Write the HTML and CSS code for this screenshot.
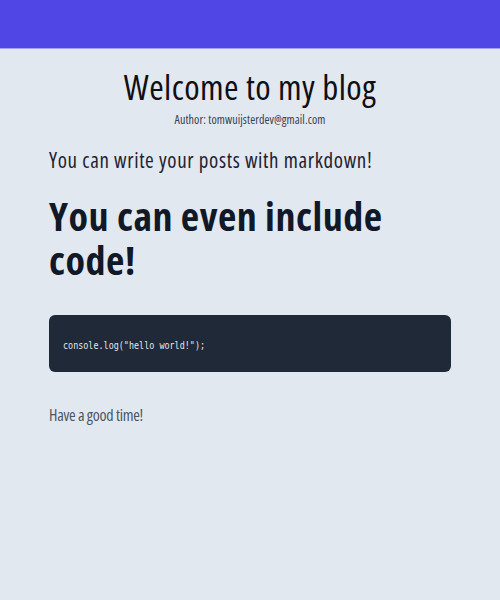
FILE: index.html
```html
<!DOCTYPE html>
<html lang="en">
<head>
<meta charset="utf-8">
<title>Welcome to my blog</title>
<link rel="stylesheet" href="styles.css">
</head>
<body>
<header class="topbar"></header>
<main class="page">
  <div class="intro">
    <h1 class="title">Welcome to my blog</h1>
    <p class="author">Author: tomwuijsterdev@gmail.com</p>
  </div>
  <article class="post">
    <p class="lead">You can write your posts with markdown!</p>
    <h2 class="big">You can even include code!</h2>
    <pre class="codeblock"><code class="code">console.log("hello world!");</code></pre>
    <p class="outro">Have a good time!</p>
  </article>
</main>
</body>
</html>
```
FILE: styles.css
```css
html, body {
  margin: 0;
  padding: 0;
}
body {
  background: #e2e8f0;
  font-family: "Open Sans", "Noto Sans", sans-serif;
  font-stretch: condensed;
  color: #111827;
  min-height: 600px;
}
.topbar {
  height: 48px;
  background: #4f46e5;
  border-bottom: 1px solid #a5a0f0;
}
.page {
  padding: 0 49px;
}
.intro {
  text-align: center;
  padding-top: 15px;
}
.title {
  margin: 0;
  font-size: 35px;
  font-weight: 400;
  line-height: 46px;
  letter-spacing: 0.45px;
  color: #0f0f14;
}
.author {
  margin: 2px 0 0;
  font-size: 12px;
  line-height: 16px;
  letter-spacing: 0.1px;
  color: #374151;
}
.post {
  padding-top: 18px;
}
.lead {
  margin: 0;
  font-size: 21px;
  line-height: 28px;
  letter-spacing: 0.65px;
  color: #1f2330;
}
.big {
  margin: 20px 0 0;
  font-size: 40px;
  font-weight: 700;
  line-height: 44px;
  letter-spacing: 0.55px;
  color: #111827;
}
.codeblock {
  margin: 33px 0 0;
  height: 57px;
  box-sizing: border-box;
  padding: 22px 14px 0;
  background: #1f2937;
  border-radius: 6px;
  overflow: hidden;
}
.code {
  display: inline-block;
  font-family: "DejaVu Sans Mono", monospace;
  font-size: 11px;
  line-height: 14px;
  color: #e5e7eb;
  transform: scaleX(0.766);
  transform-origin: left center;
  white-space: pre;
}
.outro {
  margin: 32px 0 0;
  font-size: 16px;
  line-height: 22px;
  letter-spacing: -0.3px;
  color: #4b5563;
}
```
